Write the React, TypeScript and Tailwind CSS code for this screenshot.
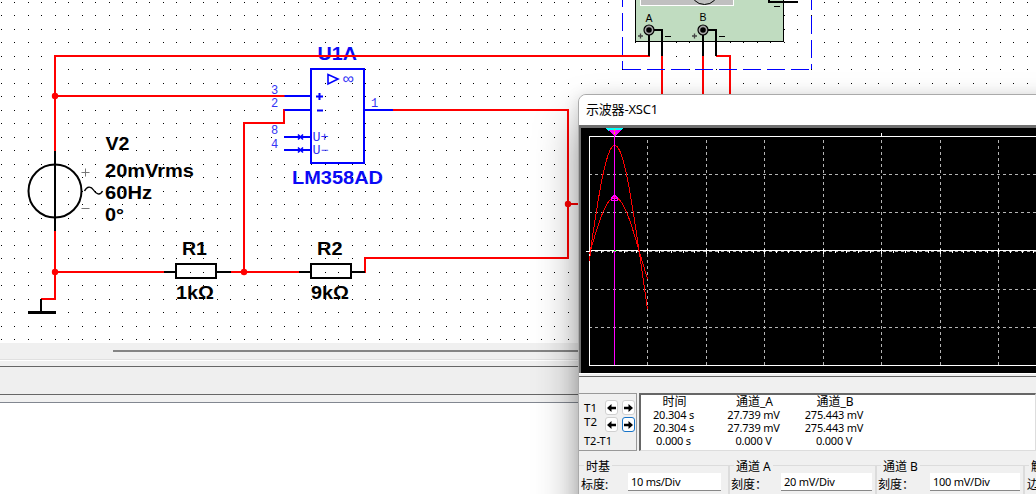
import React from "react";

const BOLD = { fontFamily: '"Liberation Sans", Arial, sans-serif', fontWeight: 700 } as const;
const MONO = { fontFamily: '"Liberation Mono", "Courier New", monospace' } as const;

function Label(p: { x: number; y: number; w: number; size?: number; children: string }) {
  return (
    <text x={p.x} y={p.y} fontSize={p.size ?? 19} textLength={p.w} lengthAdjust="spacingAndGlyphs" style={BOLD}>
      {p.children}
    </text>
  );
}

function Terminal({ x }: { x: number }) {
  return (
    <g>
      <circle cx={x} cy={30} r={5} fill="#a8a8a8" stroke="#000" strokeWidth={1.2} />
      <circle cx={x} cy={30} r={2.8} fill="#000" />
    </g>
  );
}

function Schematic() {
  return (
    <svg width={1036} height={343} viewBox="0 0 1036 343" className="block shrink-0 bg-white">
      <defs>
        <pattern id="dots" width={27} height={27} patternUnits="userSpaceOnUse">
          <rect x={1} y={2} width={1} height={1} />
          <rect x={14} y={2} width={1} height={1} />
          <rect x={1} y={15} width={1} height={1} />
          <rect x={14} y={15} width={1} height={1} />
        </pattern>
      </defs>
      <rect width={1036} height={343} fill="url(#dots)" />

      <g fill="#0a0af5">
        <Label x={317.5} y={60} w={39.5}>U1A</Label>
        <Label x={292} y={184} w={91}>LM358AD</Label>
      </g>

      <rect x={635.5} y={-10} width={148} height={51.5} fill="#c0dcc0" stroke="#000" />
      <rect x={640.5} y={-10} width={93} height={15.5} fill="#c0c0c0" stroke="#fff" />
      <circle cx={704.5} cy={-9.5} r={14} fill="none" stroke="#000" />

      <g fill="none" stroke="#f00" strokeWidth={2}>
        <path d="M55 151V55M54 56H650M55 96H285M55 231V299H41M55 272H164M231 272H299" />
        <path d="M244 272V123H284V109M393 110H568V258H365V273M568 204H580" />
        <path d="M662 56V96M703 56V96M716 56H730V96" />
      </g>
      <g fill="#f00">
        <circle cx={55} cy={96} r={3.2} />
        <circle cx={55} cy={272} r={3.2} />
        <circle cx={244} cy={272} r={3.2} />
        <circle cx={568} cy={204} r={3.2} />
      </g>

      <g fill="none" stroke="#000" strokeWidth={2}>
        <path d="M55 151V231M41 299V312M164 272H176M217 272H231M299 272H311M352 272H365" />
        <circle cx={55} cy={191} r={26.5} />
        <path d="M28 312.5H56" strokeWidth={3} />
        <rect x={176} y={264} width={40} height={14} />
        <rect x={311} y={264} width={40} height={14} />
        <path d="M84.5 191C87 186 91 186 93.500 190S100 196 102.500 191" strokeWidth={1.4} />
        <path d="M649 30V56M649 30H662V56M703 30V56M703 30H716V56M769 0V2H798" />
        <path d="M81.500 172.500H89.500M85.500 168.500V176.500M81.500 208.500H89.500" stroke="#777" strokeWidth={1} />
        <path d="M665 36.500H671M719 36.500H725M774 6.500H780" strokeWidth={1} />
        <path d="M638 36H643M640.500 33.500V38.500M692 36H697M694.500 33.500V38.500" stroke="#444" strokeWidth={1.3} />
      </g>
      <Terminal x={649} />
      <Terminal x={703} />
      <g style={{ fontFamily: '"Liberation Sans", Arial, sans-serif' }} fontSize={10.5}>
        <text x={645.500} y={21.500}>A</text>
        <text x={699.500} y={20.500}>B</text>
      </g>
      <g fill="none" stroke="#00f" strokeDasharray="18 6" shapeRendering="crispEdges">
        <path d="M622.500 -11V69" />
        <path d="M811.500 -8V69" />
        <path d="M622.500 69.500H811.500" />
      </g>

      <Label x={105.500} y={150} w={24}>V2</Label>
      <Label x={105} y={177} w={89}>20mVrms</Label>
      <Label x={105} y={199} w={47}>60Hz</Label>
      <Label x={105} y={221} w={19}>0°</Label>
      <Label x={182} y={255} w={25}>R1</Label>
      <Label x={176} y={299} w={38}>1kΩ</Label>
      <Label x={317} y={255} w={25.5}>R2</Label>
      <Label x={311} y={299} w={38}>9kΩ</Label>

      <g fill="none" stroke="#00f" strokeWidth={2}>
        <rect x={311} y={69} width={53} height={94} />
        <path d="M284.500 96H311M284.500 110H311M284 137H311M284 150H311M365 110H393" />
        <path d="M328 74.500V84L338 79Z" strokeWidth={1.6} />
        <path d="M316 96.500H323M319.500 93V100M317 110.500H323" />
        <path d="M298 134.500L303 139.500M303 134.500L298 139.500M298 147.500L303 152.500M303 147.500L298 152.500" strokeWidth={1.600} />
      </g>
      <g fill="#3333f5" fontSize={12} style={MONO}>
        <text x={271} y={94}>3</text>
        <text x={271} y={107}>2</text>
        <text x={271} y={134}>8</text>
        <text x={271} y={148}>4</text>
        <text x={371} y={107}>1</text>
        <text x={312.500} y={141} textLength={16} lengthAdjust="spacingAndGlyphs">U+</text>
        <text x={312.500} y={154} textLength={16} lengthAdjust="spacingAndGlyphs">U−</text>
        <text x={342.500} y={83.500} fontSize={16} style={{ fontFamily: '"Liberation Sans", sans-serif' }}>∞</text>
      </g>
    </svg>
  );
}

function trace(amplitude: number, start: string, end: string) {
  const points: string[] = [start];
  for (let x = 10; x <= 61; x += 1) {
    points.push(`${x},${(122.5 - amplitude * Math.sin((Math.PI * (x - 9.5)) / 48.5)).toFixed(1)}`);
  }
  points.push(end);
  return points.join(" ");
}

const columns = [66, 125, 183, 242, 300, 359, 417];
const rows = [46, 84, 123, 161, 199];
const ticks = Array.from({ length: 39 }, (_, i) => Math.floor(8.4 + i * 11.7));

function Plot() {
  return (
    <svg width={455} height={245} viewBox="0 0 455 245" shapeRendering="crispEdges" className="block bg-black">
      <g stroke="#b4b4b4" strokeDasharray="3 3">
        {columns.map((x) => <path key={x} d={`M${x + 0.5} 12V237`} />)}
        {rows.map((y) => <path key={y} d={`M8 ${y + 0.5}H455`} />)}
      </g>
      <path d="M455 8.500H8.500V237.500H455M8 122.500H455M5 123.500H8M300.500 5V9" fill="none" stroke="#fff" />
      {ticks.map((x, i) => (
        <path key={x} d={i % 5 === 0 ? `M${x + 0.5} 121V126` : `M${x + 0.5} 123V125`} stroke="#fff" />
      ))}
      <g fill="none" stroke="#f00">
        <polyline points={trace(105, "8.5,133", "66.5,181")} />
        <polyline points={trace(53, "8.5,126", "66.5,151")} />
      </g>
      <path d="M33.500 8V237" stroke="#f0f" />
      <rect x={33} y={122} width={2} height={1} fill="#0f0" />
      <path d="M25 0H42L40 2.500H27Z" fill="#0ff" />
      <path d="M27 2H40L33.500 8.500Z" fill="#f0f" />
      <path d="M33.500 1V7" stroke="#dd0" strokeDasharray="2 1" />
      <path d="M30.500 72.500V70L33.500 67L36.500 70V72.500ZM30 70.500H37" fill="none" stroke="#f0f" />
    </svg>
  );
}

function Arrow({ right, active }: { right?: boolean; active?: boolean }) {
  return (
    <span
      className={
        "flex h-[15px] w-[13px] items-center justify-center rounded-[3px] border bg-white " +
        (active ? "border-[#1874c8]" : "border-[#d0d0d0]")
      }
    >
      <svg width={9} height={8} viewBox="0 0 9 8" className={right ? "shrink-0" : "shrink-0 rotate-180"}>
        <path d="M0 2.700H4.500V0L9 4L4.500 8V5.300H0Z" />
      </svg>
    </span>
  );
}

function Cursors() {
  return (
    <div className="flex h-[58px] w-[58px] flex-col border-t border-r border-b border-[#999] pl-[5px] pt-[5px] text-[11.5px]">
      <div className="flex h-[17px] items-center">
        <span className="w-[21px]">T1</span>
        <Arrow /><span className="w-[4px]" /><Arrow right />
      </div>
      <div className="flex h-[17px] items-center">
        <span className="w-[21px] leading-[10px] pb-[5px]">T2</span>
        <Arrow /><span className="w-[4px]" /><Arrow right active />
      </div>
      <div className="h-[16px] leading-[16px] text-[11px]">T2-T1</div>
    </div>
  );
}

function Reading({ title, values, width }: { title: string; values: string[]; width: string }) {
  return (
    <div className={"flex flex-col items-center whitespace-pre text-[11px] leading-[13px] " + width}>
      <div className="pl-[2px] text-[12px]">{title}</div>
      {values.map((v, i) => <div key={i} className="tracking-[-0.2px]">{v}</div>)}
    </div>
  );
}

function Group(p: { title: string; label: string; value: string; width: string; inset: string; gap: string; field: string; pad: string }) {
  return (
    <div className={"flex h-[60px] shrink-0 flex-col " + p.width}>
      <div className="flex h-[14px] items-center">
        <span className={"h-px bg-[#dcdcdc] " + p.inset} />
        <span className="px-[2px] pt-[3px] text-[12px] leading-[14px] whitespace-pre">{p.title}</span>
        <span className="h-px grow bg-[#dcdcdc]" />
      </div>
      <div className={"-mt-[7px] flex h-[60px] border-r-2 border-[#dcdcdc] pt-[8px] " + p.pad}>
        <span className={"shrink-0 whitespace-pre pt-[1px] text-[12px] leading-[22px] " + p.gap}>{p.label}</span>
        <span className={"h-[18px] shrink-0 border-b border-[#888] bg-white pl-[3px] text-[11px] leading-[18px] tracking-[-0.25px] " + p.field}>
          {p.value}
        </span>
      </div>
    </div>
  );
}

function ScopeWindow() {
  return (
    <div className="absolute top-[94px] left-[578px] h-[560px] w-[620px] overflow-hidden rounded-t-[8px] border border-[#aaa] bg-[#f0f0f0] shadow-[0_26px_44px_rgba(0,0,0,0.38),0_2px_16px_rgba(0,0,0,0.12)]">
      <div className="h-[30px] w-full bg-white pl-[7px] text-[13px] leading-[29px] tracking-[-0.2px]">示波器-XSC1</div>
      <div className="h-[250px] w-[480px] border-t-[3px] border-l-2 border-[#707070] bg-black">
        <Plot />
      </div>
      <div className="-mt-[2px] h-[4px] border-t border-b border-t-white border-b-[#666] bg-[#f0f0f0]" />
      <div className="mt-[16px] flex w-[457px] gap-[2px]">
        <Cursors />
        <div className="flex h-[58px] grow border-t-2 border-l-2 border-r border-b border-t-[#666] border-l-[#666] border-r-[#ddd] border-b-[#ddd] bg-white">
          <Reading width="w-[65px]" title="时间" values={["20.304 s", "20.304 s", "0.000 s"]} />
          <Reading width="w-[95px]" title="通道_A" values={["27.739 mV", "27.739 mV", "0.000 V"]} />
          <Reading width="w-[66px]" title="通道_B" values={["275.443 mV", "275.443 mV", "0.000 V"]} />
        </div>
      </div>
      <div className="mt-[7px] flex">
        <Group title="时基" label="标度:" value="10 ms/Div" width="w-[151px]" inset="w-[5px]" pad="pl-[2px]" gap="w-[47px]" field="w-[93px]" />
        <Group title="通道 A" label="刻度：" value="20 mV/Div" width="w-[147px]" inset="w-[4px]" pad="pl-[1px]" gap="w-[50px]" field="w-[91px]" />
        <Group title="通道 B" label="刻度：" value="100 mV/Div" width="w-[148px]" inset="w-[4px]" pad="pl-[1px]" gap="w-[52px]" field="w-[90px]" />
        <Group title="触发" label="边沿：" value="" width="w-[148px]" inset="w-[4px]" pad="pl-[2px]" gap="w-[51px]" field="w-[90px]" />
      </div>
    </div>
  );
}

export default function App() {
  return (
    <div className="relative flex h-[494px] w-[1036px] flex-col overflow-hidden bg-white text-black [font-family:'Noto_Sans','Noto_Sans_CJK_SC',sans-serif]">
      <Schematic />
      <div className="h-[17px] shrink-0 border-b border-[#e0e0e0] bg-[#f0f0f0] pt-[7px] pl-[113px]">
        <div className="h-[2px] bg-[#858585]" />
      </div>
      <div className="h-[6px] shrink-0 border-t border-white bg-[#f0f0f0]" />
      <div className="h-[29px] shrink-0 border-t border-b border-[#666] bg-[#efefef]" />
      <div className="h-[8px] shrink-0 border-b border-[#828790] bg-[#f0f0f0]" />
      <div className="grow bg-white" />
      <ScopeWindow />
    </div>
  );
}
